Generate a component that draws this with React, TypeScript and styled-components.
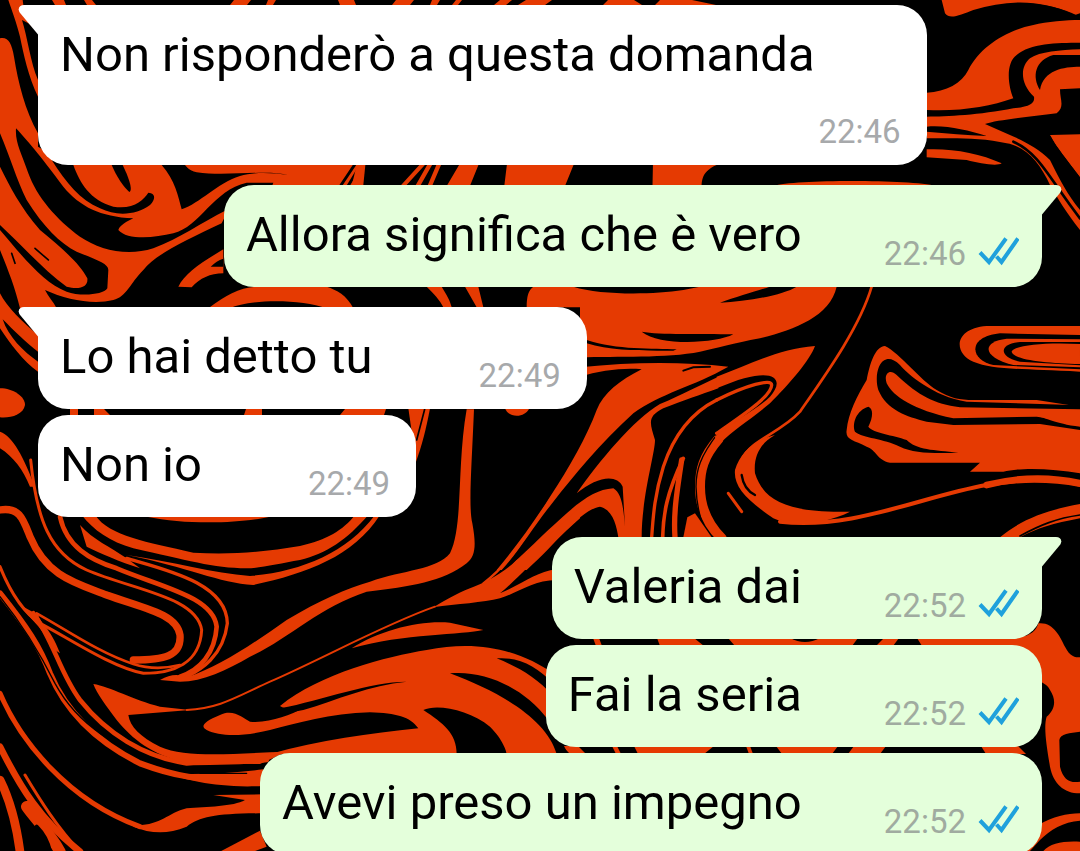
import React from "react";
import styled, { createGlobalStyle } from "styled-components";

const GlobalStyle = createGlobalStyle`
  *, *::before, *::after { box-sizing: border-box; }
  body { margin: 0; background: #000; }
`;

const INK = "#000";
const LAVA = "#e53a02";

const Screen = styled.main`
  position: relative;
  height: 100vh;
  overflow-y: auto;
  scrollbar-width: none;
  font-family: Roboto, "Noto Sans", sans-serif;
  color: #000;
`;

const Backdrop = styled.svg`
  position: fixed;
  inset: 0;
  width: 100%;
  height: 100%;
  background: ${INK};
`;

const Thread = styled.ol`
  position: relative;
  display: flex;
  flex-direction: column;
  gap: 20px;
  margin: 0;
  padding: 5px 38px 20px;
  list-style: none;
`;

const Group = styled.li<{ $mine: boolean }>`
  display: flex;
  flex-direction: column;
  align-items: ${(p) => (p.$mine ? "flex-end" : "flex-start")};
  gap: 6px;
`;

const Bubble = styled.article<{ $mine: boolean; $first: boolean; $stacked: boolean }>`
  position: relative;
  display: flex;
  flex-direction: ${(p) => (p.$stacked ? "column" : "row")};
  align-items: flex-end;
  gap: ${(p) => (p.$stacked ? "19px" : p.$mine ? "82px" : "106px")};
  max-width: 100%;
  padding: 20px ${(p) => (p.$mine ? "23px" : "26px")} 14px 22px;
  border-radius: 30px;
  border-top-left-radius: ${(p) => (p.$first && !p.$mine ? "0" : "30px")};
  border-top-right-radius: ${(p) => (p.$first && p.$mine ? "0" : "30px")};
  background: ${(p) => (p.$mine ? "#e4ffdb" : "#fff")};
`;

const Tail = styled.svg<{ $mine: boolean }>`
  position: absolute;
  top: 0;
  ${(p) => (p.$mine ? "left: 100%; margin-left: -1px;" : "right: 100%; margin-right: -1px; transform: scaleX(-1);")}
  width: 21px;
  height: 30px;
  fill: ${(p) => (p.$mine ? "#e4ffdb" : "#fff")};
`;

const Words = styled.p<{ $stacked: boolean }>`
  margin: 0 ${(p) => (p.$stacked ? "86px" : "0")} 9px 0;
  font-size: 49px;
  line-height: 59px;
`;

const Meta = styled.footer<{ $mine: boolean }>`
  display: flex;
  align-items: flex-start;
  gap: 11px;
  font-size: 33px;
  line-height: 39px;
  color: ${(p) => (p.$mine ? "#a0aba0" : "#a7a9ab")};
`;

const Ticks = styled.svg`
  width: 42px;
  height: 32px;
  fill: none;
  stroke: #1fa1dc;
  stroke-width: 4;
`;

type Message = { text: string; time: string; stacked?: boolean };
type Run = { mine: boolean; messages: Message[] };

const runs: Run[] = [
  { mine: false, messages: [{ text: "Non risponderò a questa domanda", time: "22:46", stacked: true }] },
  { mine: true, messages: [{ text: "Allora significa che è vero", time: "22:46" }] },
  {
    mine: false,
    messages: [
      { text: "Lo hai detto tu", time: "22:49" },
      { text: "Non io", time: "22:49" },
    ],
  },
  {
    mine: true,
    messages: [
      { text: "Valeria dai", time: "22:52" },
      { text: "Fai la seria", time: "22:52" },
      { text: "Avevi preso un impegno", time: "22:52" },
    ],
  },
];

/* One piece of the marbled pattern: a filled shape, or a line when w is set. */
type Swirl = { d: string; ink?: boolean; w?: number };
type Patch = { at: string; swirls: Swirl[] };

const third = (x: number, y: number) => `translate(${x} ${y}) scale(0.33333)`;

const patches: Patch[] = [
  {
    at: "translate(0 0)",
    swirls: [
      { d: "M52,0H64L66,5H55ZM84,0H92L96,5H87ZM234,0H251L247,5H230ZM268,0H276L273,5H266ZM338,0H354L356,5H340ZM396,0H414L410,5H392ZM432,0H440L437,5H430ZM456,0H462L458,5H452ZM500,0H512L506,5H494ZM526,0H552L545,5H518ZM608,0H634L642,5H603ZM660,0H692L716,5H655Z" },
      { d: "M70,409H78V415H70ZM94,409H104L110,415H94ZM246,409H262V415H244ZM345,409H386L384,415H340Z" },
      { d: "M593,638H599L602,646H596ZM657,638H694L704,646H660ZM728,638H858L852,646H735ZM884,638H899L893,646H876ZM917,638H1000V646H922Z" },
      { d: "M790,638H820Q805,646 790,638Z", ink: true },
      { d: "M564,746H578L586,754H568ZM612,746H617L621,754H616ZM634,746H714L704,754H638ZM746,746H750L753,754H749ZM776,746H838L832,754H782ZM854,746H886L880,754H848ZM981,746H1018L1026,754H986Z" },
    ],
  },
  {
    at: third(0, 0),
    swirls: [
      { d: "M25,0L68,0C70,40 100,60 114,100L114,290C85,230 70,160 60,110C50,70 35,30 25,0Z" },
      { d: "M66,60C82,110 92,190 114,240L114,95L85,70Z", ink: true },
      { d: "M0,115C25,110 35,130 42,170C55,250 75,330 114,400L114,440L200,490L1080,490L1080,560L720,560L665,670C560,720 470,760 430,810C390,850 380,890 340,900C280,915 200,900 135,870C145,890 160,905 170,925L60,925C45,860 20,800 0,750Z" },
      { d: "M485,495C525,540 535,590 545,628C600,610 650,550 720,528C760,515 820,518 865,525C800,508 680,530 590,517C565,510 560,500 555,495Z", ink: true },
      { d: "M48,385C90,430 130,480 190,560C240,620 300,650 400,655C380,665 360,675 355,690C380,720 460,715 520,700C600,680 640,570 740,548L820,548L800,600L680,630C600,670 540,715 460,745C380,770 300,750 240,710C170,660 110,590 85,520C65,460 45,430 48,385Z", ink: true },
      { d: "M220,495C240,550 270,600 340,620C400,630 430,600 445,578C470,580 465,600 450,615C410,645 350,650 300,625C240,600 200,550 155,480Z", ink: true },
      { d: "M335,495C350,530 370,560 388,576C400,570 385,530 368,495Z", ink: true },
      { d: "M0,400C30,470 50,540 80,600C130,680 180,730 230,755C290,780 325,790 325,810L322,865C310,885 240,890 200,875C130,850 60,760 0,690L0,675C60,730 130,810 200,860C240,870 265,860 262,835C240,790 180,740 120,690C60,620 30,560 0,500Z", ink: true },
      { d: "M105,745L145,780M35,760L45,790", ink: true, w: 5 },
      { d: "M535,860C555,820 600,790 670,748L670,820C630,820 600,835 575,862Z" },
      { d: "M632,800C645,788 655,780 670,776L670,800Z", ink: true },
      { d: "M625,925C680,885 720,860 780,860L980,860C1010,870 1040,885 1060,925Z" },
      { d: "M690,925C740,898 900,895 980,925Z", ink: true },
    ],
  },
  {
    at: "translate(240 150) scale(0.44643 0.33333)",
    swirls: [
      { d: "M225,108L258,42M242,108L272,42", ink: true, w: 7 },
      { d: "M262,42H281L276,108H250Z" },
      { d: "M365,108L410,42M398,108L426,42M425,108L446,42", w: 10 },
      { d: "M463,108L492,42H535L515,108ZM592,108L598,42H748L728,108ZM924,108L925,42H1072C1040,60 1035,80 1034,108ZM1195,108C1240,88 1500,88 1560,108Z" },
    ],
  },
  {
    at: third(0, 300),
    swirls: [
      { d: "M0,-20C20,20 70,70 114,105L114,215C70,185 30,130 0,85Z" },
      { d: "M8,58C40,90 80,130 114,155L114,185C70,155 25,110 8,58Z", ink: true },
      { d: "M0,265C40,265 75,290 75,315C70,345 30,355 0,352Z" },
      { d: "M0,395C40,410 70,470 105,560L90,560C70,510 40,470 0,445Z" },
    ],
  },
  {
    at: third(880, 0),
    swirls: [
      { d: "M185,0L195,40C210,60 240,45 280,30C380,0 480,-5 585,45L600,40L600,0Z" },
      { d: "M400,12C470,6 540,22 590,46L590,60L440,60Z", ink: true },
      { d: "M140,278C200,275 245,250 265,210C300,140 380,90 460,75C500,65 560,60 600,60L600,690C560,640 530,590 510,555C480,490 440,440 380,430C300,410 200,415 140,415Z" },
      { d: "M140,330C240,335 330,320 400,295C385,260 375,190 410,165C450,130 530,128 600,128L600,148C540,150 480,155 450,175C420,200 420,250 462,290C465,310 450,320 400,325C300,345 200,350 140,350Z", ink: true },
      { d: "M480,270C455,230 465,180 520,165L600,165L600,200C550,200 490,210 480,270Z", ink: true },
      { d: "M600,265L540,268C540,300 555,320 530,340C450,350 350,360 315,372C400,410 460,430 510,480C540,540 560,580 600,630L600,530C570,490 520,430 512,405L600,403Z", ink: true },
      { d: "M510,405H600V530C570,490 530,440 515,412Z" },
      { d: "M140,380C200,375 260,390 320,408C260,405 200,400 140,395Z", ink: true },
      { d: "M400,425C480,460 510,540 600,655", ink: true, w: 8 },
      { d: "M140,448C220,445 300,460 365,490C350,500 300,490 260,480L140,472Z" },
    ],
  },
  {
    at: third(400, 280),
    swirls: [
      { d: "M80,20L125,20C140,45 150,60 155,82L130,82C120,60 100,40 80,20ZM195,20L235,20L250,82L230,82Z" },
      { d: "M400,20L520,20C600,45 750,45 850,30L900,20L1310,20C1290,110 1180,150 1080,175C1000,190 950,205 900,215C800,235 650,228 540,232L540,82L380,82C380,50 385,30 400,20Z" },
      { d: "M725,155C780,200 950,190 1000,163C900,160 780,165 725,155Z", ink: true },
      { d: "M560,180C650,210 760,205 830,208L820,212C740,212 640,215 560,190Z", ink: true },
      { d: "M960,68C1010,50 1080,30 1110,20L1190,20C1150,45 1040,65 960,68Z", ink: true },
      { d: "M540,262C700,245 850,245 985,260C880,320 780,340 700,400C600,490 520,590 460,665C400,740 360,810 305,870L290,870C340,810 400,730 450,650C510,560 560,470 590,390C610,340 660,300 725,268C680,262 600,270 540,290Z" },
      { d: "M850,272L880,262L930,260", ink: true, w: 6 },
      { d: "M955,290C900,315 850,342 780,372C700,420 600,540 530,640C590,590 650,580 668,620L675,740C670,680 665,640 640,625C560,630 500,700 350,840L320,870L380,870C480,780 540,690 600,680C640,690 650,740 655,772L725,772C725,650 765,520 765,480C750,430 740,410 790,385C850,362 900,345 955,325Z" },
      { d: "M950,360C870,400 820,470 790,560C765,640 760,700 755,772", w: 10 },
      { d: "M850,535C800,640 790,700 788,772", w: 11 },
      { d: "M845,540C830,640 820,700 825,772", w: 16 },
      { d: "M955,478C910,530 900,570 900,620C900,690 930,740 965,775", w: 30 },
      { d: "M955,458C900,530 888,570 888,620C890,690 905,730 920,760", ink: true, w: 4 },
      { d: "M850,772L862,712L885,700L935,772Z" },
      { d: "M315,385H388C375,415 325,415 315,385Z" },
      { d: "M25,385L90,385C80,440 65,500 48,545Z" },
      { d: "M74,388L50,480", ink: true, w: 5 },
    ],
  },
  {
    at: third(720, 280),
    swirls: [
      { d: "M-10,290C100,250 180,205 285,198C270,240 210,310 150,370C90,420 40,450 -2,492L-16,470C40,420 110,390 150,350C200,295 160,250 -10,325Z" },
      { d: "M-10,360C80,315 155,295 155,315C155,350 60,410 -10,460", w: 10 },
      { d: "M455,20C420,140 320,280 240,395C180,460 90,480 65,540", w: 8 },
      { d: "M165,465C120,490 100,530 105,580C130,660 200,700 390,695C300,740 200,735 160,715C80,660 40,620 45,570C60,520 100,480 165,465Z" },
      { d: "M65,585C70,620 85,635 105,645", ink: true, w: 7 },
      { d: "M180,725C400,750 600,650 800,615C900,598 1000,600 1080,615", w: 12 },
      { d: "M800,615C900,590 1000,590 1090,612", w: 20 },
      { d: "M25,640L65,695", w: 9 },
      { d: "M1080,138L800,138C700,145 700,220 760,245C820,270 900,265 1080,275Z" },
      { d: "M1080,165L840,160C740,170 750,240 820,255L1080,268Z", ink: true },
      { d: "M1080,178L860,176C780,185 790,235 880,255L1080,262Z" },
      { d: "M1080,186L900,186C830,192 840,235 900,245L1080,256Z", ink: true },
      { d: "M1080,192C980,186 880,195 875,215C880,240 980,250 1080,252Z" },
      { d: "M495,198C540,220 600,300 650,330C690,355 720,360 760,360L950,360L1080,380L1080,580C1000,565 900,562 850,575L750,575L780,548L510,548C470,540 470,510 440,500C400,480 375,480 380,450C385,400 410,350 440,300C450,250 465,200 495,198Z" },
      { d: "M500,238C470,245 465,300 475,330C500,390 560,410 620,425L700,435L960,432L1080,450L1080,440C1000,430 980,412 950,410L700,415C580,390 520,350 500,310C490,280 510,265 530,285C600,350 640,370 720,382L1080,388L1080,376L740,365C640,350 560,280 540,255C525,240 510,235 500,238Z", ink: true },
      { d: "M445,380C410,390 395,430 405,455C430,475 490,475 540,500C580,520 640,520 715,518C640,510 590,510 560,480C520,465 460,460 445,440C460,410 460,385 445,380Z", ink: true },
      { d: "M840,772C900,720 980,690 1080,672L1080,715C1000,730 950,745 900,772Z" },
      { d: "M900,768C960,735 1010,715 1080,705", ink: true, w: 5 },
    ],
  },
  {
    at: third(0, 480),
    swirls: [
      { d: "M0,90C60,80 70,120 90,170C140,290 230,310 320,345C430,385 530,400 540,465C545,530 490,540 400,540", w: 22 },
      { d: "M92,-60C110,120 150,220 260,270C400,330 590,350 605,450C600,550 520,580 430,580C330,560 200,470 120,430C60,390 20,310 0,260", w: 9 },
      { d: "M110,400C200,450 300,520 400,552C450,568 500,565 540,555", w: 8 },
      { d: "M180,110C200,200 270,240 350,265C480,320 640,350 650,440C645,520 600,570 540,590", w: 14 },
      { d: "M380,235C500,270 680,310 682,430C670,530 600,570 560,590", w: 10 },
      { d: "M240,135L260,200C300,220 360,245 420,265L380,235C330,200 280,180 240,135Z" },
      { d: "M245,105L285,105C330,170 440,185 580,218C700,225 800,215 900,198C980,180 1030,150 1065,105L1105,105C1040,180 980,220 900,240C840,250 780,265 740,265C640,265 560,240 400,205C330,185 280,150 245,105Z" },
      { d: "M380,225C520,245 640,280 750,288C900,275 1040,220 1125,105L1140,105C1060,230 920,280 760,315C660,310 560,260 380,225Z" },
      { d: "M440,110L810,110C720,130 560,135 440,110Z" },
      { d: "M0,340C80,440 120,500 150,580C200,700 300,790 420,850C500,880 600,910 790,900", w: 18 },
      { d: "M0,350C80,450 130,540 165,610C230,730 340,810 560,870", ink: true, w: 4 },
      { d: "M100,400C160,480 180,580 240,660C320,760 430,830 560,850C650,845 720,850 800,840", w: 14 },
      { d: "M60,375L115,405C120,430 150,440 180,520L150,500C130,440 90,420 60,375Z" },
      { d: "M280,612C330,620 400,660 480,680L570,690L385,705C390,740 420,770 480,800C560,835 700,820 860,815L780,852L560,850C450,820 400,780 350,720C320,680 290,640 280,612Z" },
      { d: "M500,880C600,885 700,880 790,868L790,918C650,925 560,900 500,880Z" },
      { d: "M600,880L740,880", ink: true, w: 4 },
      { d: "M0,640C60,780 200,960 420,1040", w: 15 },
      { d: "M400,1035C480,1040 500,1000 560,985C620,980 700,980 735,960L640,945L790,943L790,1000C650,1000 600,1010 560,1040C500,1065 450,1060 400,1040Z" },
      { d: "M660,1115L780,1052L800,1100L760,1115Z" },
      { d: "M0,800C60,920 120,1020 240,1115", w: 20 },
      { d: "M75,885C120,960 170,1040 240,1115", w: 9 },
      { d: "M0,900C30,960 50,1040 60,1115", w: 26 },
      { d: "M80,980C100,1010 150,1060 180,1115", w: 34 },
      { d: "M110,1040C130,1060 145,1090 150,1115", ink: true, w: 12 },
    ],
  },
  {
    at: third(270, 400),
    swirls: [
      { d: "M590,28L612,28C605,200 595,320 607,370C620,440 615,470 590,490C520,545 420,560 290,575C150,620 50,720 -60,770C-130,810 -200,845 -270,845L-330,840C-300,825 -280,820 -250,832C-150,800 -50,730 50,660C150,600 230,565 300,545C400,510 500,510 540,460C580,380 560,200 590,28Z" },
      { d: "M930,320C850,400 760,470 740,480C700,520 640,550 600,565C560,580 520,605 490,622C560,612 640,608 690,595C740,580 790,540 860,540L860,508C800,515 760,550 690,580C740,540 800,470 930,355Z" },
      { d: "M640,550C720,490 760,420 840,300", w: 7 },
      { d: "M495,620C350,670 150,780 0,845C-100,890 -150,925 -250,930", w: 6 },
      { d: "M245,745C330,690 450,660 540,668L640,690C580,705 400,700 245,745Z" },
      { d: "M30,918C150,820 350,770 470,750C640,715 760,760 850,820L850,1030L900,1062L0,1062C150,1020 300,1000 445,985C420,950 380,940 300,937C180,940 80,970 0,990C-80,1010 -150,1010 -190,990C-210,980 -200,965 -150,945C-110,925 -80,955 -60,965C0,970 60,945 100,925C60,930 40,925 30,918Z" },
      { d: "M30,925C160,900 300,845 410,845C300,855 200,900 100,930L20,945Z", ink: true },
      { d: "M540,820C640,810 760,860 835,960L850,1010L900,1062L860,1062C830,960 700,880 540,820Z", ink: true },
      { d: "M680,775C750,770 800,800 850,850L850,890C800,830 740,800 680,775Z", ink: true },
      { d: "M460,930C500,910 600,930 660,980C700,1020 710,1056 710,1062L560,1062C560,1000 520,970 460,930Z", ink: true },
    ],
  },
  {
    at: third(1000, 520),
    swirls: [
      { d: "M115,310C160,305 180,350 195,380C210,410 225,412 240,412L240,635C210,640 180,640 178,660L180,740C190,780 210,790 240,785L240,820C190,820 160,790 150,740C140,680 130,620 140,590C165,570 170,540 150,510C140,490 125,490 115,480L60,378L0,378L0,350L60,350C90,350 110,330 115,310Z" },
      { d: "M115,915C160,890 200,880 240,880L240,902C190,905 150,930 120,960L90,993L70,993ZM130,993C150,970 190,962 240,965L240,993Z" },
    ],
  },
];

function Wallpaper() {
  return (
    <Backdrop viewBox="0 0 1080 851" preserveAspectRatio="xMidYMid slice" strokeLinecap="round" aria-hidden="true">
      {patches.map((patch, i) => (
        <g key={i} transform={patch.at}>
          {patch.swirls.map((s, j) => {
            const tone = s.ink ? INK : LAVA;
            return <path key={j} d={s.d} fill={s.w ? "none" : tone} stroke={s.w ? tone : "none"} strokeWidth={s.w} />;
          })}
        </g>
      ))}
    </Backdrop>
  );
}

function ReadTicks() {
  return (
    <Ticks viewBox="0 0 42 32" role="img" aria-label="Letto">
      <path d="M3 18.500L12 28L29 4.500M19.500 22.500L24.500 28L41 4.500" />
    </Ticks>
  );
}

export default function App() {
  return (
    <Screen>
      <GlobalStyle />
      <Wallpaper />
      <Thread>
        {runs.map((run, i) => (
          <Group key={i} $mine={run.mine}>
            {run.messages.map((m, j) => (
              <Bubble key={m.text} $mine={run.mine} $first={j === 0} $stacked={!!m.stacked}>
                {j === 0 && (
                  <Tail $mine={run.mine} viewBox="0 0 21 30" aria-hidden="true">
                    <path d="M0 0H15C20 0 22 4 18.500 8.500L1 29.500H0Z" />
                  </Tail>
                )}
                <Words $stacked={!!m.stacked}>{m.text}</Words>
                <Meta $mine={run.mine}>
                  <time>{m.time}</time>
                  {run.mine && <ReadTicks />}
                </Meta>
              </Bubble>
            ))}
          </Group>
        ))}
      </Thread>
    </Screen>
  );
}
